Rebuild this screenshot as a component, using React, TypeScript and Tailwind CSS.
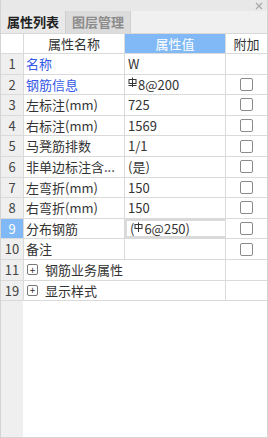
import type { ReactNode } from "react";

type Row = {
  no: string;
  name: string;
  value?: ReactNode;
  blue?: boolean;
  check?: boolean;
  group?: boolean;
  active?: boolean;
};

// steel grade symbols (HRB400 / HPB300), drawn since no font carries them
function Grade({ bar }: { bar?: boolean }) {
  return (
    <svg width="9" height="12" viewBox="0 0 9 12" className="mr-[1px] inline-block -translate-y-[1px]">
      <rect x="1" y="2.5" width="7" height="4" fill="none" stroke="currentColor" strokeWidth="1" />
      <path d="M4.5 0.5V10" stroke="currentColor" strokeWidth="1" />
      {bar && <path d="M0.5 8.5H8.5" stroke="currentColor" strokeWidth="1" />}
    </svg>
  );
}

const rows: Row[] = [
  { no: "1", name: "名称", value: "W", blue: true },
  { no: "2", name: "钢筋信息", value: <><Grade bar />8@200</>, blue: true, check: true },
  { no: "3", name: "左标注(mm)", value: "725", check: true },
  { no: "4", name: "右标注(mm)", value: "1569", check: true },
  { no: "5", name: "马凳筋排数", value: "1/1", check: true },
  { no: "6", name: "非单边标注含...", value: "(是)", check: true },
  { no: "7", name: "左弯折(mm)", value: "150", check: true },
  { no: "8", name: "右弯折(mm)", value: "150", check: true },
  { no: "9", name: "分布钢筋", value: <>(<Grade />6@250)</>, check: true, active: true },
  { no: "10", name: "备注", value: "", check: true },
  { no: "11", name: "钢筋业务属性", group: true },
  { no: "19", name: "显示样式", group: true },
];

function Check() {
  return <span className="block size-[13px] rounded-[2px] border border-[#8a8a8a] bg-white" />;
}

function Cell({ className, children }: { className: string; children?: ReactNode }) {
  return <div className={`flex items-center border-r border-[#dadada] ${className}`}>{children}</div>;
}

export default function App() {
  return (
    <div
      className="flex h-[438px] w-[268px] flex-col border-x border-b border-[#d4d4d4] bg-white text-[13px] text-[#333]"
      style={{ fontFamily: '"Microsoft YaHei", "Noto Sans CJK SC", "Noto Sans", sans-serif' }}
    >
      <div className="flex h-[11px] items-center justify-end bg-[#e8e8e8] pr-[4px]">
        <svg width="8" height="8" viewBox="0 0 8 8" className="text-[#a8a8a8]">
          <path d="M1 1L7 7M7 1L1 7" stroke="currentColor" strokeWidth="1.2" />
        </svg>
      </div>

      <div className="flex h-[23px] border-b border-[#d8d8d8] bg-[#f0f0f0]">
        <div className="flex w-[65px] items-center justify-center border-r border-[#cfcfcf] bg-[#e9e9e9] font-bold text-[#222]">
          属性列表
        </div>
        <div className="flex w-[65px] items-center justify-center border-r border-[#cfcfcf] bg-[#dcdcdc] font-bold text-[#8c8c8c]">
          图层管理
        </div>
      </div>

      <div className="flex h-[20px] border-b border-[#dadada]">
        <Cell className="w-[23px]" />
        <Cell className="w-[101px] justify-center">属性名称</Cell>
        <Cell className="w-[101px] justify-center bg-[#80b9f5] text-white">属性值</Cell>
        <div className="flex flex-1 items-center justify-center">附加</div>
      </div>

      {rows.map((r) => (
        <div key={r.no} className="flex h-[20.6px] border-b border-[#dadada]">
          <Cell
            className={`w-[23px] justify-center ${r.active ? "bg-[#80b9f5] text-white" : "bg-[#efefef] text-[#444]"}`}
          >
            {r.no}
          </Cell>
          {r.group ? (
            <Cell className="w-[202px] gap-[7px] pl-[3px]">
              <span className="flex size-[11px] items-center justify-center rounded-[2px] border border-[#777] text-[10px] leading-none">
                +
              </span>
              <span>{r.name}</span>
            </Cell>
          ) : (
            <>
              <Cell className={`w-[101px] pl-[2px] ${r.blue ? "text-[#3459e6]" : ""}`}>
                <span className="truncate">{r.name}</span>
              </Cell>
              <Cell className={`w-[101px] pl-[3px] ${r.active ? "border-2 border-[#7a7a7a] pl-[2px]" : ""}`}>
                <span className="flex items-center">{r.value}</span>
              </Cell>
              <div className="flex flex-1 items-center justify-center">{r.check && <Check />}</div>
            </>
          )}
        </div>
      ))}

      <div className="flex flex-1">
        <div className="w-[22px] bg-[#efefef]" />
      </div>
    </div>
  );
}
